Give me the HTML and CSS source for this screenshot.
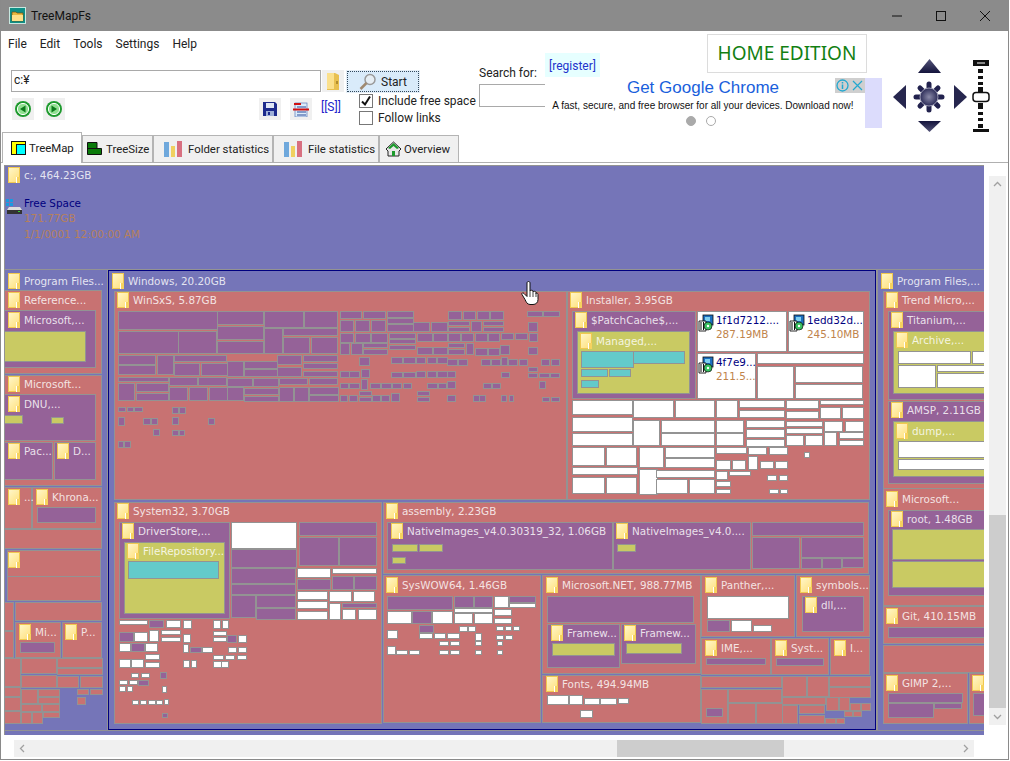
FILE: index.html
```html
<!DOCTYPE html>
<html lang="en">
<head>
<meta charset="utf-8">
<title>TreeMapFs</title>
<link rel="stylesheet" href="styles.css">
</head>
<body>
<div class="window">
  <header class="titlebar">
    <svg class="appicon" width="17" height="17" viewBox="0 0 17 17"><rect width="17" height="17" fill="#0f8f86"/><rect x=".5" y=".5" width="16" height="16" fill="none" stroke="#c8e8e0"/><path d="M3 5h4l1 1h6v8H3z" fill="#e8b840" stroke="#6b4a10" stroke-width=".7"/><path d="M3 8h11v6H3z" fill="#ffe08a"/></svg>
    <span class="apptitle">TreeMapFs</span>
    <div class="winbtns">
      <svg width="12" height="12" viewBox="0 0 12 12"><path d="M1 6h10" stroke="#111"/></svg>
      <svg width="12" height="12" viewBox="0 0 12 12"><rect x="1.5" y="1.5" width="9" height="9" fill="none" stroke="#111"/></svg>
      <svg width="12" height="12" viewBox="0 0 12 12"><path d="M1 1l10 10M11 1L1 11" stroke="#111"/></svg>
    </div>
  </header>

  <section class="top">
    <div class="left">
      <nav class="menu"><span>File</span><span>Edit</span><span>Tools</span><span>Settings</span><span>Help</span></nav>
      <div class="pathrow">
        <div class="pathinput">c:¥</div>
        <div class="iconbtn folderbtn">
          <svg width="14" height="20" viewBox="0 0 14 20"><path d="M1 2h8l4 2v15H1z" fill="#e8c050"/><path d="M1 2h7v16H1z" fill="#fbe08c"/><path d="M11 10v3" stroke="#7a5a10"/></svg>
        </div>
        <div class="startbtn">
          <svg width="18" height="18" viewBox="0 0 18 18"><circle cx="11" cy="6.5" r="5" fill="#e6eef4" stroke="#9a9a9a" stroke-width="1.5"/><path d="M7.5 10L1.5 16" stroke="#a08a70" stroke-width="2.5"/></svg>
          <span>Start</span>
        </div>
      </div>
      <div class="navrow">
        <div class="iconbtn navbtn first"><svg width="18" height="18" viewBox="0 0 18 18"><circle cx="9" cy="9" r="8" fill="#1e9a2e"/><circle cx="9" cy="9" r="5.6" fill="#8fe08f" stroke="#fff"/><path d="M11.5 5.5v7L6 9z" fill="#0c7a1c"/></svg></div>
        <div class="iconbtn navbtn"><svg width="18" height="18" viewBox="0 0 18 18"><circle cx="9" cy="9" r="8" fill="#1e9a2e"/><circle cx="9" cy="9" r="5.6" fill="#8fe08f" stroke="#fff"/><path d="M6.5 5.5v7L12 9z" fill="#0c7a1c"/></svg></div>
        <div class="iconbtn navbtn save"><svg width="14" height="14" viewBox="0 0 14 14"><path d="M0 0h12l2 2v12H0z" fill="#1c2a8c"/><rect x="3" y="1" width="8" height="5" fill="#dfe6f5"/><rect x="3" y="9" width="8" height="5" fill="#9fb0d8"/><rect x="5" y="10" width="2" height="3" fill="#1c2a8c"/></svg></div>
        <div class="iconbtn navbtn"><svg width="16" height="15" viewBox="0 0 16 15"><rect x="2" y="1" width="12" height="14" fill="#dcecfa" stroke="#5b78b8" stroke-width=".7"/><rect x="1" y="1" width="7" height="2" fill="#d01010"/><path d="M4 5h9M4 10h9M4 13h9" stroke="#2a4a9a"/><rect y="6.500" width="16" height="2" fill="#d01010"/></svg></div>
        <a class="slink">[[S]]</a>
        <div class="checks">
          <label class="check"><span class="box"><svg width="12" height="12" viewBox="0 0 12 12"><path d="M2 6.500l3 3 5-8" fill="none" stroke="#111" stroke-width="2"/></svg></span>Include free space</label>
          <label class="check"><span class="box"></span>Follow links</label>
        </div>
      </div>
    </div>
    <div class="search">
      <div class="searchlabel">Search for:</div>
      <div class="searchinput"></div>
    </div>
    <div class="adcol">
      <div class="adtop">
        <a class="register">[register]</a>
        <div class="edition">HOME EDITION</div>
      </div>
      <div class="adwrap">
        <div class="ad">
          <div class="adhead">Get Google Chrome</div>
          <div class="adtext">A fast, secure, and free browser for all your devices. Download now!</div>
          <div class="dots"><i class="dot on"></i><i class="dot"></i></div>
          <div class="adctl">
            <svg width="15" height="15" viewBox="0 0 15 15"><circle cx="7.500" cy="7.500" r="5.500" fill="none" stroke="#22a8d0" stroke-width="1.300"/><path d="M7.500 6.500v4.500M7.500 4v1.500" stroke="#22a8d0" stroke-width="1.500"/></svg>
            <svg width="15" height="15" viewBox="0 0 15 15"><path d="M3 3l9 9M12 3l-9 9" stroke="#22a8d0" stroke-width="1.200"/></svg>
          </div>
        </div>
      </div>
    </div>
    <svg class="dpad" width="100" height="74" viewBox="0 0 100 74">
      <defs>
        <linearGradient id="dk" x1="0" y1="0" x2="0" y2="1"><stop offset="0" stop-color="#14143c"/><stop offset="1" stop-color="#55557a"/></linearGradient>
        <linearGradient id="dk2" x1="0" y1="1" x2="0" y2="0"><stop offset="0" stop-color="#14143c"/><stop offset="1" stop-color="#55557a"/></linearGradient>
        <radialGradient id="hub"><stop offset="0" stop-color="#8a8aa8"/><stop offset="1" stop-color="#2c2c58"/></radialGradient>
      </defs>
      <path d="M28 15L39.500 1 51 15z" fill="url(#dk2)"/>
      <path d="M28 63h23L39.500 74z" fill="url(#dk)"/>
      <path d="M16 27v24L3 39z" fill="#26264e"/>
      <path d="M64 27v24l13-12z" fill="#26264e"/>
      <g stroke="#22224e" stroke-width="5" stroke-linecap="round">
        <path d="M39 26v26M26 39h26M30 30l18 18M48 30L30 48"/>
      </g>
      <circle cx="39" cy="39" r="9" fill="url(#hub)" stroke="#9c9cb4"/>
      <g fill="#111">
        <rect x="83" y="2" width="16" height="6"/>
        <rect x="88" y="11" width="5" height="4"/><rect x="88" y="18" width="5" height="3"/><rect x="88" y="24" width="5" height="3"/><rect x="88" y="29" width="5" height="5"/>
        <rect x="88" y="45" width="5" height="6"/><rect x="88" y="54" width="5" height="3"/><rect x="88" y="60" width="5" height="3"/><rect x="88" y="66" width="5" height="4"/>
        <rect x="83" y="71" width="16" height="3"/>
      </g>
      <rect x="87" y="4.500" width="8" height="1" fill="#fff"/>
      <rect x="83" y="34.500" width="16" height="9" rx="3" fill="#fff" stroke="#111" stroke-width="1.500"/>
    </svg>
  </section>

  <div class="tabs">
    <div class="tab active t1"><svg width="15" height="14" viewBox="0 0 15 14"><rect x=".5" y=".5" width="14" height="13" fill="#ff0" stroke="#111"/><rect x="5.500" y="3.500" width="9" height="10" fill="#0ff" stroke="#111"/></svg>TreeMap</div>
    <div class="tab t2"><svg width="15" height="13" viewBox="0 0 15 13"><path d="M1 .5h9v6h4.500v6H.5v-12z" fill="#0a7a0a" stroke="#111"/><path d="M1 6.500h9" stroke="#111"/></svg>TreeSize</div>
    <div class="tab t3"><svg class="bars" width="18" height="16" viewBox="0 0 18 16"><rect x="0" y="1" width="5" height="15" fill="#6fa8dc"/><rect x="7" y="5" width="4" height="11" fill="#f0d060"/><rect x="13" y="0" width="5" height="16" fill="#d87080"/></svg>Folder statistics</div>
    <div class="tab t4"><svg class="bars" width="18" height="16" viewBox="0 0 18 16"><rect x="0" y="1" width="5" height="15" fill="#6fa8dc"/><rect x="7" y="5" width="4" height="11" fill="#f0d060"/><rect x="13" y="0" width="5" height="16" fill="#d87080"/></svg>File statistics</div>
    <div class="tab t5"><svg width="17" height="16" viewBox="0 0 17 16"><path d="M1 8l7.500-7L16 8l-2 2v5H3v-5z" fill="#e8e8e8" stroke="#222"/><path d="M3 7l5.500-5L14 7l-2 1-3.500-3L5 8z" fill="#1c9a2c"/><rect x="7" y="10" width="3" height="5" fill="#1c9a2c"/></svg>Overview</div>
  </div>

  <main class="panel">
    <div class="mapcol">
      <div class="map" id="map"></div>
      <div class="hscroll">
        <svg width="9" height="9" viewBox="0 0 9 9"><path d="M6 1L2.500 4.500 6 8" fill="none" stroke="#a0a0a0" stroke-width="1.300"/></svg>
        <div class="hthumb"></div>
        <svg width="9" height="9" viewBox="0 0 9 9"><path d="M3 1l3.500 3.500L3 8" fill="none" stroke="#a0a0a0" stroke-width="1.300"/></svg>
      </div>
    </div>
    <div class="vscroll">
      <svg width="9" height="9" viewBox="0 0 9 9"><path d="M1 6l3.500-3.500L8 6" fill="none" stroke="#a0a0a0" stroke-width="1.300"/></svg>
      <div class="vthumb"></div>
      <svg width="9" height="9" viewBox="0 0 9 9"><path d="M1 3l3.500 3.500L8 3" fill="none" stroke="#a0a0a0" stroke-width="1.300"/></svg>
    </div>
  </main>
</div>
<script src="script.js"></script>
</body>
</html>
```
FILE: styles.css
```css
* { box-sizing: border-box; }
html, body { margin: 0; padding: 0; background: #fff; }
body { width: 1010px; height: 761px; overflow: hidden; font-family: Roboto, "Noto Sans", sans-serif; font-size: 12px; color: #222; }
.window { width: 1009px; height: 760px; border: 1px solid #8a8a8a; border-top: 0; display: flex; flex-direction: column; background: #fff; }

.titlebar { height: 31px; background: #8b8b8b; display: flex; align-items: center; padding-left: 8px; flex: none; }
.appicon { margin-right: 5px; }
.apptitle { color: #111; font-size: 12px; }
.winbtns { margin-left: auto; display: flex; gap: 32px; padding-right: 17px; }

.top { height: 101px; display: flex; flex: none; }
.left { width: 478px; flex: none; }
.menu { height: 26px; display: flex; align-items: center; padding-left: 7px; gap: 13px; }
.pathrow { display: flex; margin: 13px 0 0 10px; height: 22px; }
.pathinput { width: 310px; height: 22px; border: 1px solid #a9a9a9; padding-left: 2px; line-height: 19px; }
.iconbtn { background: #f0f0f0; display: flex; align-items: center; justify-content: center; flex: none; }
.folderbtn { width: 22px; height: 22px; margin-left: 1px; }
.startbtn { width: 72px; height: 21px; margin: 1px 0 0 3px; background: #d9ebfa; border: 1px dotted #33495c; outline: 1px solid #e4eef7; display: flex; align-items: center; gap: 4px; padding-left: 11px; }
.navrow { display: flex; align-items: flex-start; height: 32px; margin-top: 2px; }
.navbtn { width: 22px; height: 22px; margin: 4px 0 0 9px; }
.navbtn.first { margin-left: 11px; }
.navbtn.save { margin-left: 194px; }
.slink { color: #2222cc; margin: 6px 0 0 9px; width: 22px; font-size: 12px; }
.checks { margin-left: 16px; display: flex; flex-direction: column; gap: 3px; }
.check { display: flex; align-items: center; gap: 5px; height: 14px; white-space: nowrap; }
.box { width: 14px; height: 14px; border: 1px solid #777; background: #fff; display: flex; align-items: center; justify-content: center; flex: none; }

.search { width: 66px; flex: none; padding-top: 33px; }
.searchlabel { height: 18px; line-height: 18px; white-space: nowrap; }
.searchinput { height: 23px; margin-top: 2px; border: 1px solid #a9a9a9; border-right: 0; }

.adcol { width: 337px; flex: none; }
.adtop { height: 47px; display: flex; align-items: flex-start; }
.register { width: 55px; height: 24px; margin-top: 22px; background: #e6ffff; color: #2233cc; line-height: 26px; text-align: center; flex: none; }
.edition { width: 160px; height: 39px; margin: 3px 0 0 107px; border: 1px solid #dcdcdc; color: #128012; font-family: "Noto Sans", sans-serif; font-size: 19px; line-height: 37px; text-align: center; white-space: nowrap; flex: none; }
.adwrap { height: 50px; background: #dcdcfc; }
.ad { width: 320px; height: 50px; background: #fff; position: relative; font-family: "Liberation Sans", Arial, sans-serif; text-align: center; }
.adhead { color: #1a5fdc; font-size: 17px; line-height: 20px; padding-right: 4px; }
.adtext { color: #111; font-size: 10px; line-height: 14px; margin-top: 1px; padding-right: 4px; white-space: nowrap; }
.dots { display: flex; justify-content: center; gap: 10px; margin-top: 3px; padding-right: 8px; }
.dot { width: 10px; height: 10px; border-radius: 50%; border: 1px solid #aaa; }
.dot.on { background: #aaa; }
.adctl { position: absolute; right: 0; top: 0; display: flex; gap: 0; background: #cfcfcf; }
.dpad { margin: 27px 0 0 8px; flex: none; }

.tabs { height: 30px; display: flex; align-items: flex-end; padding-left: 1px; flex: none; }
.tab { height: 27px; padding-bottom: 1px; background: #f0f0f0; border: 1px solid #b4b4b4; border-bottom: 0; display: flex; align-items: center; flex: none; white-space: nowrap; font-size: 11.400px; }
.tab.active { height: 31px; background: #fff; margin-bottom: -1px; position: relative; z-index: 1; padding-bottom: 0; }
.t1 { width: 80px; padding-left: 8px; gap: 3px; }
.t2 { width: 71px; padding-left: 4px; gap: 4px; }
.t3 { width: 120px; padding-left: 10px; gap: 6px; }
.t4 { width: 106px; padding-left: 10px; gap: 6px; }
.t5 { width: 80px; padding-left: 5px; gap: 2px; }

.panel { flex: 1; border-top: 1px solid #b0b0b0; display: flex; padding: 2px 0 0 3px; min-height: 0; }
.mapcol { width: 980px; flex: none; }
.map { width: 980px; height: 570px; position: relative; overflow: hidden; background: #999; }
.hscroll { width: 960px; height: 17px; margin: 5px 0 0 10px; background: #f0f0f0; display: flex; align-items: center; justify-content: space-between; padding: 0 4px; position: relative; }
.hthumb { position: absolute; left: 603px; width: 167px; top: 0; height: 17px; background: #cdcdcd; }
.vscroll { width: 17px; height: 549px; margin: 11px 0 0 5px; background: #f0f0f0; display: flex; flex-direction: column; align-items: center; justify-content: space-between; padding: 4px 0; position: relative; }
.vthumb { position: absolute; left: 0; top: 339px; width: 17px; height: 193px; background: #cdcdcd; }

.tile { position: absolute; border: 1px solid #939393; }
.tile.b { background: #7575b8; }
.tile.r { background: #c87272; }
.tile.p { background: #956298; }
.tile.y { background: #c9ca63; }
.tile.t { background: #63caca; }
.tile.w { background: #fff; }
.tile.sel { background: #7575b8; border-color: #00007f; }
.lab { position: absolute; display: flex; align-items: center; gap: 4px; height: 16px; font-family: "DejaVu Sans", Verdana, sans-serif; font-size: 10.400px; color: rgba(255,255,255,.82); white-space: nowrap; }
.fold { width: 12px; height: 16px; flex: none; position: relative; background: linear-gradient(135deg, #fff6c8, #ffe07c); border: 1px solid #f0c850; }
.fold::after { content: ""; position: absolute; right: -1px; bottom: -1px; width: 3px; height: 6px; background: #f6d25e; border-left: 1px solid #fff; }
.fname { position: absolute; font-family: "DejaVu Sans", Verdana, sans-serif; font-size: 10.400px; color: #00007f; line-height: 14px; white-space: nowrap; }
.fsize { color: #c0844c; }
.fsize.dim { color: #b5805c; }
.mark { position: absolute; }
```
FILE: script.js
```js
var map = document.getElementById('map');
var OX = 4, OY = 165;

function rect(x0, y0, x1, y1, type) {
  var d = document.createElement('div');
  d.className = 'tile ' + type;
  d.style.left = (x0 - OX) + 'px';
  d.style.top = (y0 - OY) + 'px';
  d.style.width = (x1 - x0) + 'px';
  d.style.height = (y1 - y0) + 'px';
  map.appendChild(d);
}
// rectangles measured on a 3x grid from a local origin; the measured far edge is inclusive
function zoomed(ox, oy, type, list) {
  list.forEach(function (r) {
    rect(Math.round(ox + r[0] / 3), Math.round(oy + r[1] / 3), Math.round(ox + r[2] / 3) + 1, Math.round(oy + r[3] / 3) + 1, r[4] || type);
  });
}
function label(x, cy, text) {
  var d = document.createElement('div');
  d.className = 'lab';
  d.style.left = (x - OX) + 'px';
  d.style.top = (cy - 8 - OY) + 'px';
  d.innerHTML = '<span class="fold"></span>';
  if (text) { var s = document.createElement('span'); s.textContent = text; d.appendChild(s); }
  map.appendChild(d);
}
function fileText(x, cy, text, cls) {
  var d = document.createElement('div');
  d.className = 'fname ' + (cls || '');
  d.style.left = (x - OX) + 'px';
  d.style.top = (cy - 7 - OY) + 'px';
  d.textContent = text;
  map.appendChild(d);
}
function mark(x, y, w, h, body) {
  var d = document.createElement('div');
  d.className = 'mark';
  d.style.left = (x - OX) + 'px';
  d.style.top = (y - OY) + 'px';
  d.innerHTML = '<svg width="' + w + '" height="' + h + '" viewBox="0 0 ' + w + ' ' + h + '">' + body + '</svg>';
  map.appendChild(d);
}

/* top level */
rect(4, 165, 990, 270, 'b');
rect(4, 269, 108, 735, 'b');
rect(877, 269, 990, 735, 'b');
rect(4, 730, 990, 740, 'b');
rect(108, 270, 876, 730, 'sel');

/* left column */
[
 [4,290,102,374,'r'],[4,310,96,368,'p'],[4,331,86,362,'y'],
 [4,375,102,486,'r'],[4,394,96,441,'p'],[4,415,23,424,'y'],[51,417,64,424,'y'],[4,442,53,480,'p'],[54,442,96,480,'p'],
 [4,487,32,529,'r'],[32,487,102,529,'r'],[37,507,96,523,'p'],
 [4,529,102,549,'r'],[7,550,101,577,'r'],[7,576,101,601,'r'],
 [4,602,14,631,'r'],[4,631,14,658,'r'],[15,602,102,621,'r'],[15,622,61,658,'r'],[62,622,102,658,'r'],[20,642,55,653,'p']
].forEach(function (r) { rect(r[0], r[1], r[2], r[3], r[4]); });
zoomed(0, 480, 'r', [
 [12,535,60,618],[12,622,60,648],[12,652,60,690],[12,693,60,730],
 [63,535,167,580],[63,585,167,622],[170,535,305,560],[172,565,305,583],[172,587,235,622],[240,587,305,622],
 [63,626,112,668],[115,626,178,648],[115,652,178,670],[63,672,122,692],[127,672,178,692],
 [63,697,93,730],[97,697,125,730],[130,697,178,712],[232,626,265,643],[270,626,305,643],[232,650,254,673]
]);

/* Windows */
[[114,291,567,500,'r'],[567,291,870,500,'r'],[114,502,382,724,'r'],[383,502,869,574,'r'],[383,575,541,723,'r'],
 [542,575,701,674,'r'],[542,675,701,723,'r'],[701,575,795,637,'r'],[796,575,870,637,'r'],
 [701,638,771,675,'r'],[771,638,829,675,'r'],[830,638,870,675,'r']
].forEach(function (r) { rect(r[0], r[1], r[2], r[3], r[4]); });

/* WinSxS */
zoomed(110, 300, 'p', [
 [25,32,320,88],[322,32,460,73],[463,32,578,80],[583,32,680,80],[25,92,203,160],[205,92,318,160],[322,77,460,118],[322,122,460,160],
 [463,83,515,160],[520,83,680,105],[520,110,598,160],[604,110,680,160],[25,165,136,192],[140,165,188,222],[192,165,347,182],[25,196,136,222],
 [192,188,268,226],[274,188,350,226],[352,182,398,228],[403,182,500,203],[403,208,500,228],[502,165,572,193],[578,165,680,182],[578,188,680,205],
 [502,200,572,228],[578,212,680,228],[25,231,175,244],[178,231,262,256],[265,231,347,256],[352,233,427,258],[430,233,503,258],[508,233,592,253],
 [596,233,680,253],[25,248,73,300],[77,248,173,272],[77,278,173,300],[178,260,232,300],[236,260,290,300],[296,260,350,300],[352,262,400,300],
 [403,263,503,281],[403,287,503,304],[508,260,548,303],[553,260,593,303],[598,260,683,281],[598,284,683,303],
 [25,320,46,334],[50,320,70,334],[73,320,95,334],[187,320,203,338],[208,320,224,338],[25,352,41,374],[100,355,119,371],[122,355,140,371],
 [187,352,203,371],[295,355,311,371],[130,388,146,404],[187,391,203,406],[206,391,221,406],[25,424,40,440],[43,424,59,440]
]);
zoomed(340, 270, 'p', [
 [0,122,64,145],[68,122,136,145],[140,122,218,140],[0,150,40,182],[44,150,88,182],[92,150,134,182],[140,144,218,160],[140,163,218,182],[220,155,268,182],[272,155,320,182],
 [0,188,40,215],[44,188,90,215],[94,188,140,215],[146,188,224,203],[146,206,224,220],[146,224,224,238],[230,188,276,212],[278,188,322,212],
 [0,218,28,253],[32,218,66,253],[70,218,140,232],[70,238,140,253],[230,230,276,253],[278,230,322,253],
 [58,260,86,284],[152,260,186,278],[190,260,224,278],[228,260,254,280],[260,260,288,280],[292,260,320,280],
 [0,302,28,322],[28,302,58,322],[62,298,86,322],[152,305,186,322],[190,305,224,322],[228,302,254,322],[260,302,288,322],[292,302,320,322],[322,302,344,322],
 [0,338,24,355],[28,338,58,355],[64,328,82,358],[90,338,120,355],[122,338,152,355],[156,338,184,355],[188,338,214,355],[262,338,290,355],[294,338,318,355],[322,334,344,355],
 [0,375,22,393],[26,375,52,393],[56,362,92,376],[56,380,92,393],[96,375,120,393],[124,375,148,393],[154,370,176,393],[232,362,266,376],[232,380,266,393],[322,376,344,393],
 [325,122,364,148],[368,122,406,148],[410,122,446,148],[450,122,488,148],[325,152,388,166],[325,170,388,184],[394,152,424,184],[428,152,488,166],[428,170,488,184],
 [325,188,360,212],[364,188,400,212],[404,188,440,212],[444,188,476,212],[482,188,520,208],[524,188,562,208],[566,188,592,214],
 [325,218,372,232],[325,238,372,252],[378,218,398,252],[404,234,440,255],[444,234,476,255],[480,224,506,252],
 [564,156,592,184],[562,122,606,138],[610,122,656,138],[564,230,592,252],
 [322,268,350,286],[354,268,382,286],[424,268,450,286],[454,268,480,286],[484,260,500,286],[504,268,532,284],[536,268,562,284],[604,268,628,286],[632,268,656,286],
 [484,305,508,322],[564,290,592,304],[564,308,592,322],[598,308,626,322],[630,308,656,322],
 [430,338,452,355],[456,338,480,355],[598,334,614,355],
 [398,375,416,393],[418,375,436,393],[484,375,498,393],[506,375,520,393],[606,380,628,393],[634,380,656,393]
]);

/* Installer */
zoomed(560, 300, 'w', [
 [36,32,406,295,'p'],[50,92,388,280,'y'],[64,152,218,202,'t'],[220,152,372,188,'t'],[64,206,142,228,'t'],[146,206,210,228,'t'],[64,240,113,260,'t'],
 [410,32,678,153],[684,32,910,153],[410,158,586,295],[592,158,910,190],[592,197,700,295],[704,197,906,246],[704,252,906,295]
]);
zoomed(340, 270, 'w', [
 [695,390,875,433],[878,390,1000,442],[695,440,875,482],[878,450,956,526],[695,488,875,526],
 [695,530,793,586],[797,530,889,586],[896,530,970,592],[695,590,892,612],[896,598,952,672],[695,620,793,670],[797,620,889,670]
]);
zoomed(670, 270, 'w', [
 [14,390,133,442],[137,390,202,442],[208,390,343,412],[208,420,343,442],[347,390,445,414],[347,422,445,445],[449,390,580,403],[449,410,511,445],[517,410,580,445],
 [-28,450,133,485],[137,450,220,487],[227,450,343,472],[227,477,343,500],[347,453,457,468],[347,475,457,488],[461,453,517,482],[524,453,580,482],
 [-28,490,133,526],[137,490,220,526],[227,507,343,528],[347,494,400,526],[404,494,455,526],[461,486,498,526],[506,486,580,505],[506,510,580,526],
 [-15,530,133,560],[137,532,227,548],[233,532,289,552],[296,532,352,552],
 [-15,565,133,592],[137,570,179,598],[185,570,226,598],[233,558,262,598],[270,572,310,595],[314,572,352,595],[401,547,417,562],
 [-42,600,133,622],[137,602,172,628],[177,602,241,616],
 [-42,626,51,670],[56,626,133,670],[137,634,179,649],[137,656,179,670],[292,614,319,631],[326,614,352,631],[298,656,323,670],[330,656,352,670]
]);

/* System32 */
zoomed(0, 480, 'w', [
 [356,125,688,415,'p'],[371,185,671,398,'y'],[385,244,653,293,'t'],
 [692,125,889,205],[692,208,889,260,'p'],[692,263,884,308,'p'],[692,313,884,341,'p'],[692,345,764,412,'p'],[767,345,884,380,'p'],[767,385,884,416,'p'],
 [896,125,1127,166,'p'],[896,170,1013,256,'p'],[1017,170,1127,256,'p'],
 [890,263,990,292],[995,263,1127,280],[890,298,990,328,'p'],[995,287,1058,328,'p'],[1062,287,1127,328,'p'],
 [890,333,982,358],[986,333,1053,362],[1058,333,1122,362],[890,362,982,385],[890,392,982,416],[986,368,1020,416],
 [1025,368,1127,382,'p'],[1025,387,1066,416],[1074,387,1127,416],
 [356,420,442,433],[446,420,490,442,'p'],[497,420,541,442],[548,420,574,445],[639,420,661,445],[665,420,685,445],
 [356,455,398,484,'p'],[402,455,442,484],[446,450,475,484],[482,450,541,462],[482,470,541,484],[548,462,571,487],[639,453,677,466],[639,470,677,484],[680,464,707,485,'p'],[713,464,739,485],
 [356,488,391,514],[394,488,431,514,'p'],[436,488,472,514],[548,491,565,517],[571,500,602,517,'p'],[605,500,635,517],[683,500,708,517],[713,500,739,517],
 [436,521,478,538],[640,524,670,538],[674,524,703,538],[710,524,739,538],
 [356,537,391,561],[394,537,430,561],[436,545,478,561],[548,539,568,561],[572,539,589,561],[640,542,662,561],[664,542,685,561],
 [392,578,415,592],[422,578,446,592],[481,575,499,595,'p'],[356,600,382,612],[386,600,411,612],[415,600,443,614,'p'],
 [356,618,376,633],[380,618,397,633],[485,617,499,637],[395,659,415,672],[419,659,439,672],[445,659,464,672],[469,659,487,672],[491,656,505,672],[487,698,502,712,'p']
]);

/* assembly, SysWOW64, Microsoft.NET, Fonts */
zoomed(340, 490, 'w', [
 [142,95,815,236,'p'],[818,95,1230,236,'p'],[157,163,232,182,'y'],[236,163,305,182,'y'],[157,202,194,218,'y'],[832,163,885,182,'y'],
 [142,317,337,358,'p'],[342,317,398,350,'p'],[402,317,456,350,'p'],[462,317,503,352],[506,317,584,335,'p'],[506,338,584,352],[342,353,456,367],
 [142,362,212,400],[216,362,272,400,'p'],[277,362,335,400],[342,370,395,400],[402,370,456,400],[462,357,512,376],[462,383,512,400],
 [142,420,172,445],[238,406,278,425,'p'],[238,428,276,445],[281,428,316,445],[320,428,356,445],[358,407,380,423],[385,407,406,423],[467,407,488,421],[494,407,514,421],[518,407,536,421],
 [296,452,323,466],[329,452,356,466],[404,428,422,450],[404,452,422,466],[467,434,488,448],[494,434,516,448],[470,452,485,466],
 [142,467,164,493],[167,479,200,493],[206,479,236,493],[296,479,323,493],[329,479,356,493],[406,479,422,493],[470,479,485,493],
 [622,317,1060,397,'p'],[622,402,838,530,'p'],[842,402,1064,518,'p'],[637,460,821,494,'y'],[857,460,1023,488,'y'],
 [622,614,685,642],[688,614,727,642],[731,625,777,642],[781,625,827,642],[833,625,865,640],[720,661,755,680]
]);

/* lower right of Windows */
zoomed(670, 490, 'r', [
 [245,95,578,136,'p'],[245,140,388,235,'p'],[392,140,578,200,'p'],[392,205,452,235,'p'],[456,205,512,235,'p'],[517,205,578,232,'p'],
 [110,317,355,385,'w'],[110,390,178,422,'p'],[182,390,244,422,'w'],[248,404,304,422,'w'],[395,317,580,422,'p'],
 [109,505,284,521,'p'],[319,505,458,525,'p'],
 [94,558,332,592],[94,596,172,698],[175,596,332,635],[175,640,254,700],[258,640,335,700],[109,655,155,677,'p'],
 [337,558,407,618],[410,558,474,618],[477,558,600,588],[477,592,600,620],[337,622,465,643],[468,622,503,660],[507,622,536,660],[540,638,570,660],[574,638,600,660],
 [337,646,382,698],[386,646,462,670],[386,675,462,698],[522,662,545,678],[549,662,572,678],[466,684,495,700],[498,684,522,700]
]);

/* right column */
zoomed(670, 270, 'w', [
 [638,62,960,655,'r'],[653,122,960,388,'p'],[668,182,960,370,'y'],[683,242,900,280],[905,242,960,280],[683,284,795,350],[800,284,960,304],[800,308,960,350],
 [653,392,960,640,'p'],[668,452,960,618,'y'],[683,512,960,562],[683,566,960,596]
]);
zoomed(670, 490, 'r', [
 [638,-5,960,345],[653,60,960,315,'p'],[667,118,960,208,'y'],[667,212,960,292,'y'],
 [638,348,960,460],[653,410,960,442,'p'],[638,465,960,545],[638,550,892,700],[653,610,875,635,'p'],[653,638,788,680,'p'],[792,638,872,655,'p'],[896,550,960,700],[910,610,960,676,'p']
]);

/* labels */
[
 [8,175,'c:, 464.23GB'],[8,281,'Program Files...'],[112,281,'Windows, 20.20GB'],[8,300,'Reference...'],[8,320,'Microsoft,...'],
 [8,384,'Microsoft...'],[8,404,'DNU,...'],[8,451,'Pac...'],[57,451,'D...'],[8,497,'...'],[36,497,'Khrona...'],[8,560,''],[19,632,'Mi...'],[65,632,'P...'],
 [117,300,'WinSxS, 5.87GB'],[570,300,'Installer, 3.95GB'],[575,320,'$PatchCache$,...'],[580,341,'Managed,...'],
 [117,511,'System32, 3.70GB'],[122,531,'DriverStore,...'],[127,551,'FileRepository...'],
 [386,511,'assembly, 2.23GB'],[391,531,'NativeImages_v4.0.30319_32, 1.06GB'],[616,531,'NativeImages_v4.0....'],
 [386,585,'SysWOW64, 1.46GB'],[546,585,'Microsoft.NET, 988.77MB'],[551,633,'Framew...'],[624,633,'Framew...'],[546,684,'Fonts, 494.94MB'],
 [705,585,'Panther,...'],[800,585,'symbols...'],[805,605,'dll,...'],[705,648,'IME,...'],[775,648,'Syst...'],[834,648,'I...'],
 [881,281,'Program Files,...'],[886,300,'Trend Micro,...'],[891,320,'Titanium,...'],[896,340,'Archive,...'],[891,410,'AMSP, 2.11GB'],[896,431,'dump,...'],
 [886,499,'Microsoft...'],[891,519,'root, 1.48GB'],[886,616,'Git, 410.15MB'],[886,683,'GIMP 2,...'],[972,683,'']
].forEach(function (l) { label(l[0], l[1], l[2]); });

/* free space */
mark(6, 199, 16, 15, '<rect x="0" y="0" width="3" height="3" fill="#1a9ae0"/><rect x="4" y="0" width="3" height="3" fill="#1a9ae0"/><rect x="0" y="4" width="3" height="3" fill="#1a9ae0"/><rect x="4" y="4" width="3" height="3" fill="#1a9ae0"/><path d="M3 8h11l2 3v4H1v-4z" fill="#ddd"/><rect x="1" y="11" width="15" height="4" fill="#333"/><rect x="12" y="12" width="2" height="1" fill="#3c3"/>');
fileText(24, 203, 'Free Space');
fileText(24, 218, '171.77GB', 'fsize dim');
fileText(24, 234, '1/1/0001 12:00:00 AM', 'fsize dim');

/* installer packages */
var pkg = '<rect x="5" y="1" width="10" height="10" fill="#1c6fc0" stroke="#111" stroke-width=".8"/><rect x="7" y="3" width="5" height="4" fill="#7fd0f0"/><path d="M1 7h7v10H1z" fill="#fff" stroke="#111" stroke-width=".9"/><path d="M3 8v8M5.500 8v8" stroke="#111"/><circle cx="10" cy="12" r="4" fill="#38c060" stroke="#111" stroke-width=".7"/><circle cx="10" cy="12" r="1.200" fill="#fff"/>';
[[698,314],[789,314],[698,356]].forEach(function (p) { mark(p[0], p[1], 16, 18, pkg); });
fileText(716, 320, '1f1d7212....'); fileText(716, 334, '287.19MB', 'fsize');
fileText(807, 320, '1edd32d...'); fileText(807, 334, '245.10MB', 'fsize');
fileText(716, 362, '4f7e9...'); fileText(716, 376, '211.5...', 'fsize');

/* mouse pointer */
mark(521, 281, 18, 25, '<path d="M6 2c0-2 3-2 3 0v8c0-1 3-1 3 0v1c0-1 3-1 3 .500v1c0-1 2-.5 2 1v5c0 3-2 5-5 5H9c-3 0-4-3-5-5l-3-5c-.5-2 1-2 2-1l3 3z" fill="#fff" stroke="#111"/><path d="M9 10v6M12 11v5M15 12v4" stroke="#111" stroke-width=".8"/>');
```
